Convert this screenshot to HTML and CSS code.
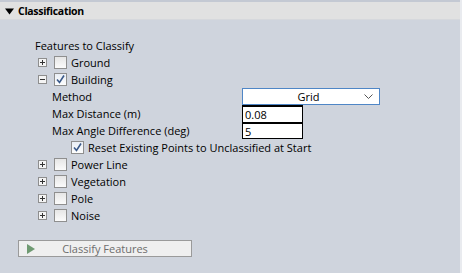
FILE: index.html
```html
<!DOCTYPE html>
<html>
<head>
<meta charset="utf-8">
<link rel="stylesheet" href="styles.css">
</head>
<body>
<div class="panel">
  <div class="topline"></div>
  <div class="header">
    <svg class="caret" width="9" height="7" viewBox="0 0 9 7"><path d="M0 0.5 H9 L4.5 6.5 Z" fill="#000"/></svg>
    <span>Classification</span>
  </div>
  <div class="content">
    <div class="row title">Features to Classify</div>

    <div class="row item">
      <span class="exp"><svg width="9" height="9" viewBox="0 0 9 9"><rect x="0.5" y="0.5" width="8" height="8" fill="#f4f4f4" stroke="#8e8e8e"/><path d="M2 4.5 H7 M4.5 2 V7" stroke="#333" stroke-width="1"/></svg></span>
      <span class="cb"></span>
      <span class="lbl">Ground</span>
    </div>

    <div class="row item">
      <span class="exp"><svg width="9" height="9" viewBox="0 0 9 9"><rect x="0.5" y="0.5" width="8" height="8" fill="#f4f4f4" stroke="#8e8e8e"/><path d="M2 4.5 H7" stroke="#333" stroke-width="1"/></svg></span>
      <span class="cb checked"><svg width="11" height="11" viewBox="0 0 11 11"><path d="M2 5.5 L4.5 8.5 L9 1.5" fill="none" stroke="#3b5a8a" stroke-width="1.6"/></svg></span>
      <span class="lbl">Building</span>
    </div>

    <div class="settings">
      <div class="srow"><span class="slbl">Method</span>
        <div class="select"><span class="sval">Grid</span><svg class="chev" width="9" height="6" viewBox="0 0 9 6"><path d="M0.5 0.5 L4.5 4.5 L8.5 0.5" fill="none" stroke="#555" stroke-width="1"/></svg></div>
      </div>
      <div class="srow"><span class="slbl">Max Distance (m)</span><div class="tbox">0.08</div></div>
      <div class="srow"><span class="slbl">Max Angle Difference (deg)</span><div class="tbox second">5</div></div>
      <div class="srow reset">
        <span class="cb checked"><svg width="11" height="11" viewBox="0 0 11 11"><path d="M2 5.5 L4.5 8.5 L9 1.5" fill="none" stroke="#3b5a8a" stroke-width="1.6"/></svg></span>
        <span class="lbl">Reset Existing Points to Unclassified at Start</span>
      </div>
    </div>

    <div class="row item">
      <span class="exp"><svg width="9" height="9" viewBox="0 0 9 9"><rect x="0.5" y="0.5" width="8" height="8" fill="#f4f4f4" stroke="#8e8e8e"/><path d="M2 4.5 H7 M4.5 2 V7" stroke="#333" stroke-width="1"/></svg></span>
      <span class="cb"></span>
      <span class="lbl">Power Line</span>
    </div>
    <div class="row item">
      <span class="exp"><svg width="9" height="9" viewBox="0 0 9 9"><rect x="0.5" y="0.5" width="8" height="8" fill="#f4f4f4" stroke="#8e8e8e"/><path d="M2 4.5 H7 M4.5 2 V7" stroke="#333" stroke-width="1"/></svg></span>
      <span class="cb"></span>
      <span class="lbl">Vegetation</span>
    </div>
    <div class="row item">
      <span class="exp"><svg width="9" height="9" viewBox="0 0 9 9"><rect x="0.5" y="0.5" width="8" height="8" fill="#f4f4f4" stroke="#8e8e8e"/><path d="M2 4.5 H7 M4.5 2 V7" stroke="#333" stroke-width="1"/></svg></span>
      <span class="cb"></span>
      <span class="lbl">Pole</span>
    </div>
    <div class="row item">
      <span class="exp"><svg width="9" height="9" viewBox="0 0 9 9"><rect x="0.5" y="0.5" width="8" height="8" fill="#f4f4f4" stroke="#8e8e8e"/><path d="M2 4.5 H7 M4.5 2 V7" stroke="#333" stroke-width="1"/></svg></span>
      <span class="cb"></span>
      <span class="lbl">Noise</span>
    </div>
  </div>
  <div class="btnwrap">
    <div class="btn">
      <svg class="play" width="8" height="10" viewBox="0 0 8 10"><path d="M0 0 L8 5 L0 10 Z" fill="#6f9a72"/></svg>
      <span class="btxt">Classify Features</span>
    </div>
  </div>
</div>
</body>
</html>
```

FILE: styles.css
```css
html, body {
  margin: 0;
  padding: 0;
  width: 462px;
  height: 273px;
  overflow: hidden;
  background: #cfd4dd;
}
.panel {
  width: 460px;
  height: 273px;
  border-right: 2px solid #e9ebef;
  font-family: "Open Sans", "Noto Sans", sans-serif;
  font-size: 11px;
  color: #000;
}
.topline {
  height: 2px;
  background: #c4c9d3;
}
.header {
  height: 17px;
  background: #e1e1e1;
  border-bottom: 1px solid #d6d8dc;
  display: flex;
  align-items: center;
  padding-left: 5px;
  gap: 4px;
  font-weight: bold;
  font-size: 10.5px;
  letter-spacing: -0.3px;
}
.caret { margin-top: 1px; }
.content {
  padding-top: 17px;
  padding-left: 35px;
}
.row {
  height: 17px;
  line-height: 17px;
  display: flex;
  align-items: center;
}
.item { padding-left: 3px; }
.exp {
  width: 9px;
  height: 9px;
  display: flex;
  margin-right: 7px;
}
.cb {
  width: 11px;
  height: 11px;
  border: 1px solid #8f8f8f;
  background: linear-gradient(#e6e6e6, #fbfbfb);
  display: flex;
  margin-right: 4px;
  flex: none;
}
.cb.checked { background: linear-gradient(#e9eef5, #fdfdfd); }
.settings {
  padding-left: 17px;
}
.srow {
  height: 17px;
  display: flex;
  align-items: center;
}
.slbl {
  width: 190px;
}
.select {
  width: 136px;
  height: 15px;
  border: 1px solid #4f86c6;
  background: #fff;
  display: flex;
  align-items: center;
}
.sval {
  flex: 1;
  text-align: center;
  padding-left: 10px;
}
.chev { margin-right: 6px; }
.tbox {
  width: 57px;
  height: 15px;
  border: 1px solid #000;
  border-width: 2px 1px 1px 1px;
  background: #fff;
  line-height: 15px;
  padding-left: 2px;
  box-sizing: content-box;
}
.tbox.second {
  height: 14px;
}
.reset {
  padding-left: 19px;
}
.btnwrap {
  padding: 16px 0 0 18px;
}
.btn {
  width: 172px;
  height: 15px;
  border: 1px solid #9a9a9a;
  background: #efefef;
  display: flex;
  align-items: center;
  color: #6d6d6d;
}
.play { margin-left: 8px; }
.btxt {
  flex: 1;
  text-align: center;
  padding-right: 16px;
}
```
